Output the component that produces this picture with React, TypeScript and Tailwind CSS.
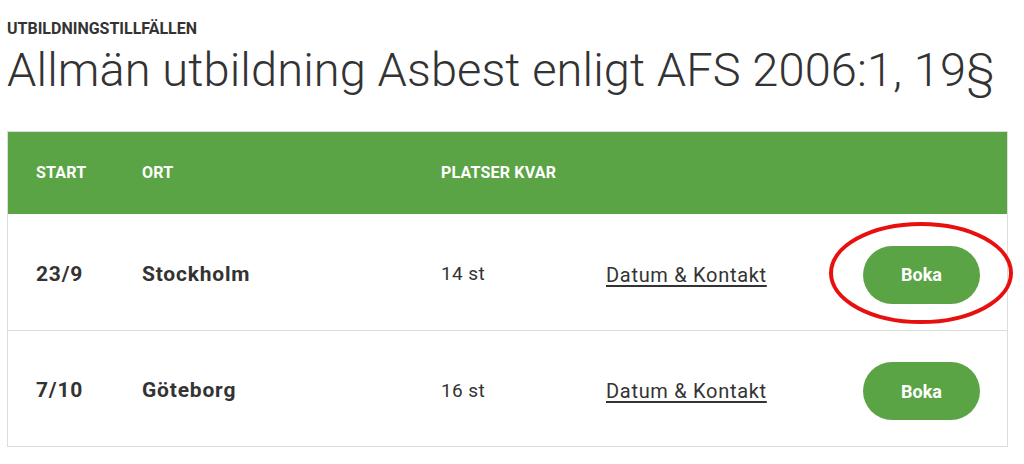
const rows = [
  { start: "23/9", ort: "Stockholm", platser: "14 st", highlighted: true },
  { start: "7/10", ort: "Göteborg", platser: "16 st", highlighted: false },
];

const cols = "grid grid-cols-[106px_299px_165px_1fr_117px] items-center pl-[28px] pr-[27px]";

export default function App() {
  return (
    <div className="h-[464px] w-[1024px] bg-white text-[#333] font-['Roboto','Liberation_Sans',sans-serif]">
      <div className="pl-[7px] pt-[20px]">
        <p className="text-[16px] font-bold leading-[18px] text-[#333]">
          UTBILDNINGSTILLFÄLLEN
        </p>
        <h1 className="mt-[4px] text-[47px] font-light leading-[56px] tracking-[0.1px] text-[#333]">
          Allmän utbildning Asbest enligt AFS 2006:1, 19§
        </h1>
      </div>

      <div className="ml-[7px] mt-[33px] w-[1001px] border border-[#ddd]">
        <div className={`${cols} h-[82px] bg-[#5ba446] text-[16px] font-bold tracking-[0.2px] text-white`}>
          <span>START</span>
          <span>ORT</span>
          <span>PLATSER KVAR</span>
          <span />
          <span />
        </div>

        {rows.map((row, i) => (
          <div
            key={row.start}
            className={`${cols} relative h-[116px] pt-[5px] ${i > 0 ? "border-t border-[#ddd]" : ""}`}>
            <span className="text-[21px] font-bold tracking-[0.8px]">{row.start}</span>
            <span className="text-[21px] font-bold tracking-[0.8px]">{row.ort}</span>
            <span className="text-[19px] tracking-[0.4px]">{row.platser}</span>
            <span>
              <a href="#" className="text-[20px] tracking-[0.7px] underline underline-offset-[3px]">
                Datum &amp; Kontakt
              </a>
            </span>
            <button
              type="button"
              className="h-[58px] w-[117px] rounded-full bg-[#5ba446] text-[18px] font-bold text-white">
              Boka
            </button>

            {row.highlighted && (
              <svg
                className="pointer-events-none absolute left-[818px] top-[6px]"
                width="190"
                height="106"
                viewBox="0 0 190 106">
                <ellipse cx="95" cy="53" rx="90" ry="49" fill="none" stroke="#e8100f" strokeWidth="4" />
              </svg>
            )}
          </div>
        ))}
      </div>
    </div>
  );
}
